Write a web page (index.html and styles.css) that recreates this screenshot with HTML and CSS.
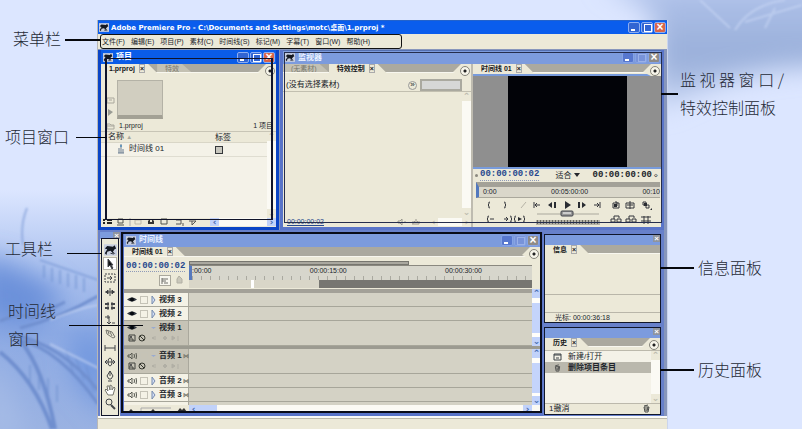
FILE: index.html
```html
<!DOCTYPE html>
<html lang="zh-CN">
<head>
<meta charset="utf-8">
<title>Adobe Premiere Pro</title>
<link rel="stylesheet" href="styles.css">
</head>
<body>
<svg class="scene" viewBox="0 0 802 429" preserveAspectRatio="none" aria-hidden="true">
  <defs>
    <filter id="soft" x="-30%" y="-30%" width="160%" height="160%"><feGaussianBlur stdDeviation="13"/></filter>
    <filter id="fine"><feGaussianBlur stdDeviation="1"/></filter>
    <linearGradient id="sky" x1="0" y1="0" x2="0" y2="1"><stop offset="0" stop-color="#b3c5ec"/><stop offset=".6" stop-color="#98aed9"/><stop offset="1" stop-color="#c6d4f2"/></linearGradient>
    <linearGradient id="ground" x1="0" y1="0" x2="0" y2="1"><stop offset="0" stop-color="#dce6ff"/><stop offset=".3" stop-color="#b0c5f0"/><stop offset=".6" stop-color="#8eabe4"/><stop offset="1" stop-color="#9ab2e2"/></linearGradient>
  </defs>
  <rect width="802" height="429" fill="#dce6ff"/>
  <path d="M600-20H840V66Q760 64 700 90L655 110V15Z" fill="url(#sky)" filter="url(#soft)"/>
  <rect y="190" width="100" height="239" fill="url(#ground)"/>
  <g filter="url(#soft)">
    <path d="M-20 255Q40 270 65 300L30 330L-20 320Z" fill="#6c91da"/>
    <path d="M70 330L110 340V420L75 380Z" fill="#7298df"/>
    <path d="M-10 350L30 440H-20Z" fill="#a5bbe6"/>
  </g>
  <g fill="none" stroke="#708fcf" filter="url(#fine)">
    <path d="M0 321Q22 312 32 318L65 302M20 328Q60 318 98 296M12 334Q62 345 98 390M20 340Q60 350 98 404" stroke-width="3"/>
    <path d="M20 340Q44 370 55 429M0 352Q35 380 52 429" stroke-width="4"/>
    <path d="M27 208Q20 225 23 245M40 260L98 280M44 265V278M52 268V282M60 270V284M68 273V287M76 275V289M84 278V292M30 365V383M39 370V390M48 378V398M57 385V402M66 350L74 375M76 358L84 380M86 366L94 392" stroke-width="2" opacity=".55"/>
  </g>
  <g fill="none" stroke="#cad8f5" stroke-width="2" opacity=".6" filter="url(#fine)"><path d="M735 30Q750 5 785 0M745 22L802 5M700 0L730 28M765 28L775 8M50 320Q80 308 98 305M50 344L98 368"/></g>
</svg>

<svg class="symbols" aria-hidden="true">
  <symbol id="horse" viewBox="0 0 16 14"><rect width="16" height="14" fill="#c9cfdf"/><path d="M1 5L4 2L11 3L13 1L15 5L13 6L11 9L14 12L11 11L8 8L4 9L3 13L1 11L4 6Z" fill="#141820"/><path d="M8 11L12 12" stroke="#141820"/></symbol>
  <symbol id="eye" viewBox="0 0 10 7"><path d="M0 3Q5-1 10 3Q5 7 0 3Z" fill="#343a43"/><circle cx="5" cy="3" r="2" fill="#05090f"/></symbol>
  <symbol id="speaker" viewBox="0 0 10 8"><path d="M1 3H3L5 1V7L3 5H1ZM7 2Q8 4 7 6M9 1Q10 4 9 7" fill="none" stroke="#565850"/></symbol>
  <symbol id="tri" viewBox="0 0 5 8"><path d="M1 0L4 4L1 8Z" fill="#d2def7" stroke="#778bad"/></symbol>
  <symbol id="down" viewBox="0 0 8 5"><path d="M0 1H8L4 4Z" fill="#9aabd0"/></symbol>
  <symbol id="frame" viewBox="0 0 8 8"><path d="M1 1H7V7H1ZM1 5H5V7" fill="none" stroke="#41433e"/><path d="M2 2H4V4H2Z" fill="#555"/></symbol>
  <symbol id="nope" viewBox="0 0 8 8"><circle cx="4" cy="4" r="3" fill="none" stroke="#35372f"/><path d="M2 2L6 6" stroke="#35372f"/></symbol>
  <symbol id="keys" viewBox="0 0 28 8"><path d="M3 2V6M2 3L0 4L2 5M13 2L15 4L13 6L11 4ZM20 2L23 4L20 6ZM26 2V7" fill="#b1afa5" stroke="#b1afa5"/></symbol>
  <symbol id="trash" viewBox="0 0 7 9"><path d="M1 3H6L5 8H2ZM1 2L5 1M3 4V7M5 3L4 7" fill="none" stroke="#494b49"/></symbol>
</svg>

<main class="page">
  <aside class="labels left">
    <p class="l-menu">菜单栏</p><p class="l-project">项目窗口</p><p class="l-tools">工具栏</p><p class="l-time">时间线<br>窗口</p>
  </aside>

  <div class="app">
    <header class="titlebar">
      <svg class="logo"><use href="#horse"/></svg>
      <h1>Adobe Premiere Pro - C:\Documents and Settings\motc\桌面\1.prproj *</h1>
      <span class="winbtns"><button aria-label="最小化" class="min"></button><button aria-label="还原" class="max"></button><button aria-label="关闭" class="close">×</button></span>
    </header>
    <nav class="menubar">
      <div class="menus">
        <button>文件(F)</button><button>编辑(E)</button><button>项目(P)</button><button>素材(C)</button><button>时间线(S)</button><button>标记(M)</button><button>字幕(T)</button><button>窗口(W)</button><button>帮助(H)</button>
        <span class="leader menu-leader"></span>
      </div>
    </nav>

    <div class="workspace">
      <div class="upper">
        <section class="window project">
          <header class="wintitle"><svg class="logo"><use href="#horse"/></svg><h2>项目</h2><span class="winbtns"><button aria-label="最小化" class="min"></button><button aria-label="最大化" class="max"></button><button aria-label="关闭" class="close">×</button></span></header>
          <div class="tabs"><button class="tab on">1.prproj <i>×</i></button><button class="tab">特效</button><button class="more" aria-label="菜单"></button></div>
          <div class="preview">
            <div class="pvbtns"><svg viewBox="0 0 9 7"><path d="M1 1H8V6H1ZM3 3H6" fill="none" stroke="#aaa89d"/></svg><svg viewBox="0 0 9 7"><path d="M2 0L7 3L2 7Z" fill="#999b94"/></svg></div>
            <div class="thumb"></div>
          </div>
          <div class="bin"><svg viewBox="0 0 9 7"><path d="M1 1H4L5 2H8V6H1ZM1 3H8" fill="none" stroke="#aaa89d"/></svg><span>1.prproj</span><span class="count">1 项目</span></div>
          <div class="listwrap">
            <table class="list">
              <thead><tr><th>名称 <small>▲</small></th><th>标签</th></tr></thead>
              <tbody><tr><td><svg viewBox="0 0 8 10"><path d="M4 0V9M2 4V9M6 5V9M1 9H7" stroke="#6b7c91" fill="none"/><circle cx="4" cy="2" r="1" fill="#4f8cba"/></svg>时间线 01</td><td><span class="swatch"></span></td></tr></tbody>
            </table>
            <span class="vscroll pale"><b>⌃</b><b>⌄</b></span>
          </div>
          <div class="binbar">
            <svg viewBox="0 0 100 8"><path d="M2 2H4M6 2H11M2 5H4M6 5H11" stroke="#222" stroke-width="2"/><path d="M17 1H22V5H17ZM16 7H23M60 1H66V6H60Z" fill="#ece9da" stroke="#50524d"/><path d="M29 0V8" stroke="#aaa"/><path d="M34 2H40V6H34Z" fill="none" stroke="#bbb8aa"/><path d="M47 6V3L49 1V4H51V1L53 3V6Z" fill="#333"/><path d="M75 2H80V6H75M82 5V8M88 3H95L91 7V3" fill="none" stroke="#555"/></svg>
            <span class="hscroll"><b>‹</b><b>›</b></span>
          </div>
          <span class="callout c-project"><span class="leader"></span></span>
        </section>

        <section class="window monitor dim">
          <header class="wintitle"><svg class="logo"><use href="#horse"/></svg><h2>监视器</h2><span class="winbtns"><button aria-label="最小化" class="min"></button><button aria-label="最大化" class="max"></button><button aria-label="关闭" class="close">×</button></span></header>
          <div class="panes">
            <div class="effects">
              <div class="tabs"><button class="tab">(无素材)</button><button class="tab on">特效控制 <i>×</i></button><button class="more" aria-label="菜单"></button></div>
              <div class="clip"><span>(没有选择素材)</span><button aria-label="显示时间线">»</button><span class="mini"></span></div>
              <div class="effbody"><span class="vscroll pale"><b>⌃</b><b>⌄</b></span></div>
              <div class="efffoot"><a href="#time">00:00:00:02</a><svg viewBox="0 0 24 8"><path d="M1 3H3L5 1V7L3 5H1ZM7 4H9M15 6H22V3M16 6V3M19 1V5M17 3L19 5L21 3" fill="none" stroke="#9a988e"/></svg><span class="hscroll pale"><b>‹</b><b>›</b></span></div>
            </div>
            <div class="program">
              <div class="tabs"><button class="tab on">时间线 01 <i>×</i></button><button class="more" aria-label="菜单"></button></div>
              <div class="viewer"><div class="screen"></div></div>
              <div class="times"><span class="knob"></span><a href="#time">00:00:00:02</a><select aria-label="缩放"><option>适合</option></select><svg viewBox="0 0 6 4"><path d="M0 0H6L3 4Z" fill="#25272c"/></svg><span class="total">00:00:00:00</span><small>◇</small></div>
              <div class="mruler"><span>0:00</span><span>00:05:00:00</span><span>00:10</span></div>
              <svg class="transport" viewBox="0 0 188 27">
                <g fill="none" stroke="#35373c">
                  <path d="M17 3Q15 3 16 5L15 6L16 7Q15 9 17 9M31 3Q33 3 32 5L33 6L32 7Q33 9 31 9M61 3V9M62 6H67M64 4L62 6L64 8M121 6H126M124 4L126 6L124 8M127 3V9"/>
                  <path d="M16 17Q14 17 15 19L14 20L15 21Q14 23 16 23M17 20H21M31 20H35M33 18L35 20L33 22M37 17Q39 17 38 19L39 20L38 21Q39 23 37 23M43 17Q41 17 42 19L41 20L42 21Q41 23 43 23M50 17Q52 17 51 19L52 20L51 21Q52 23 50 23"/>
                  <path d="M140 4H146V9H140ZM142 3H144V7H142M153 4H161V9H153ZM157 2V10M154 6H160M170 3H173V6H170ZM173 6H176V9H173Z"/>
                  <path d="M138 20H142V23H138ZM144 20H148V23H144ZM141 20V17H146V19M153 20H157V23H153ZM159 20H163V23H159ZM156 20V17H161V19M168 18H178M168 22H178M171 17V25M175 17V25"/>
                </g>
                <g fill="#292c32"><path d="M79 3V9L75 6ZM81 3H83V9H81ZM92 2L98 6L92 10ZM105 3H107V9H105ZM109 3V9L113 6ZM45 18L49 20L45 22ZM141 5H144V8H141ZM171 4H174V7H171ZM179 9V11H177Z"/></g>
                <path d="M48 9L53 3" stroke="#b6b3a6"/>
                <path d="M64 15H126" stroke="#aaa89d"/><rect x="88" y="12" width="12" height="5" rx="1" fill="#999" stroke="#41434a"/><path d="M90 14H98" stroke="#fff"/>
                <rect x="63" y="21" width="64" height="5" fill="#b4b2a8"/><path d="M64 23H126" stroke="#68675e" stroke-width="4" stroke-dasharray="1 2"/>
              </svg>
            </div>
          </div>
          <span class="callout c-monitor"><span class="leader"></span></span>
        </section>
      </div>

      <div class="lower">
        <section class="toolbox" aria-label="工具栏">
          <header><button aria-label="关闭">×</button></header>
          <svg class="brand"><use href="#horse"/></svg>
          <button class="sel" aria-label="选择"><svg viewBox="0 0 12 12"><path d="M4 1V9L6 7L8 11L9 10L7 7H9Z" fill="#101215"/></svg></button>
          <button aria-label="轨道选择"><svg viewBox="0 0 12 12"><path d="M1 2H11V10H1Z" stroke-dasharray="2 1"/><path d="M3 6H8M6 4L8 6L6 8"/></svg></button>
          <button aria-label="波纹编辑"><svg viewBox="0 0 12 12"><path d="M6 2V10M1 6H11" /><path d="M2 6L4 4V8ZM10 6L8 4V8Z" fill="#333"/></svg></button>
          <button aria-label="滚动编辑"><svg viewBox="0 0 12 12"><path d="M4 2V10M8 2V10"/><path d="M1 4H5M7 4H11M1 8H5M7 8H11" stroke-width="2"/></svg></button>
          <button aria-label="速率伸缩"><svg viewBox="0 0 12 12"><path d="M1 3H6M4 1V5M5 3V10M3 8L5 10L7 8M8 9H11"/></svg></button>
          <button aria-label="剃刀"><svg viewBox="0 0 12 12"><path d="M2 2L8 4L11 9L9 10L3 6ZM4 3L5 6M6 4L8 8" stroke="#77776e"/></svg></button>
          <button aria-label="滑动"><svg viewBox="0 0 12 12"><path d="M1 3V9M11 3V9M1 6H11"/></svg></button>
          <button aria-label="滑行"><svg viewBox="0 0 12 12"><path d="M1 6H11M3 4L1 6L3 8M9 4L11 6L9 8"/><ellipse cx="6" cy="6" rx="2" ry="4"/></svg></button>
          <button aria-label="钢笔"><svg viewBox="0 0 12 12"><path d="M6 1L9 6L7 9H5L3 6ZM6 1V6M4 11H8"/></svg></button>
          <button aria-label="手形"><svg viewBox="0 0 12 12"><path d="M4 11L1 6L2 5L4 7L3 2L5 2L6 6L6 1L8 2V6L10 3L11 4L9 11Z" fill="#fff" stroke="#77766d"/></svg></button>
          <button aria-label="缩放"><svg viewBox="0 0 12 12"><circle cx="5" cy="4" r="3"/><path d="M7 7L11 11" stroke-width="2"/></svg></button>
          <span class="callout c-tools"><span class="leader"></span></span>
        </section>

        <section class="window timeline dim">
          <header class="wintitle"><svg class="logo"><use href="#horse"/></svg><h2>时间线</h2><span class="winbtns"><button aria-label="最小化" class="min"></button><button aria-label="最大化" class="max"></button><button aria-label="关闭" class="close">×</button></span></header>
          <div class="tabs"><button class="tab on">时间线 01 <i>×</i></button><button class="more" aria-label="菜单"></button></div>
          <div class="tltop">
            <div class="tlinfo"><a href="#time" id="time">00:00:00:02</a><div><button class="snap" aria-label="吸附"><svg viewBox="0 0 10 8"><path d="M2 1V7M2 2H8M2 4H6M4 6H8" stroke="#6e6f6a" fill="none"/></svg></button><svg class="mark" viewBox="0 0 7 9"><path d="M1 8V4L3 1L6 4V8Z" fill="#c9c7ba" stroke="#b2b0a4"/></svg></div></div>
            <div class="ruler"><div class="zoombar"></div><div class="scale"><span>:00:00</span><span>00:00:15:00</span><span>00:00:30:00</span></div><div class="work"></div></div>
          </div>
          <div class="group">
            <div class="tracks">
              <div class="band"></div>
              <div class="track"><div class="head"><svg><use href="#eye"/></svg><i></i><svg class="t"><use href="#tri"/></svg>视频 3</div></div>
              <div class="track"><div class="head"><svg><use href="#eye"/></svg><i></i><svg class="t"><use href="#tri"/></svg>视频 2</div></div>
              <div class="track open"><div class="head"><svg><use href="#eye"/></svg><i></i><svg class="t"><use href="#down"/></svg>视频 1</div><div class="sub"><svg><use href="#frame"/></svg><svg><use href="#nope"/></svg><svg class="k"><use href="#keys"/></svg></div></div>
            </div>
            <span class="vscroll"><b>⌃</b><b>⌄</b></span>
          </div>
          <div class="group audio">
            <div class="tracks">
              <div class="track open"><div class="head"><svg><use href="#speaker"/></svg><i></i><svg class="t"><use href="#down"/></svg>音频 1<em>⋈</em></div><div class="sub"><svg><use href="#frame"/></svg><svg><use href="#nope"/></svg><svg class="k"><use href="#keys"/></svg></div></div>
              <div class="track"><div class="head"><svg><use href="#speaker"/></svg><i></i><svg class="t"><use href="#tri"/></svg>音频 2<em>⋈</em></div></div>
              <div class="track"><div class="head"><svg><use href="#speaker"/></svg><i></i><svg class="t"><use href="#tri"/></svg>音频 3<em>⋈</em></div></div>
              <div class="track cut"></div>
            </div>
            <span class="vscroll"><b>⌃</b><b>⌄</b></span>
          </div>
          <div class="tlfoot"><svg viewBox="0 0 65 8"><path d="M4 7L7 4L10 7ZM26 7L29 4L32 7ZM53 7L56 3L58 5L60 3L63 7Z" fill="#333"/><path d="M17 6V3H47" fill="none" stroke="#aaa"/></svg><span class="hscroll"><b>‹</b><b>›</b></span></div>
          <span class="callout c-time"><span class="leader"></span></span>
        </section>

        <div class="side">
          <section class="palette info">
            <header><button aria-label="关闭">×</button></header>
            <div class="tabs"><button class="tab on">信息 <i>×</i></button></div>
            <div class="blank"></div><div class="blank two"></div><p>光标: 00:00:36:18</p>
            <span class="leader"></span>
          </section>
          <section class="palette history">
            <header><button aria-label="关闭">×</button></header>
            <div class="tabs"><button class="tab on">历史 <i>×</i></button><button class="more" aria-label="菜单"></button></div>
            <div class="hist">
              <ul><li><svg viewBox="0 0 9 8"><path d="M1 1H8V7H1ZM1 2H8M3 5H6" fill="none" stroke="#3c4247"/></svg>新建/打开</li><li class="cur"><svg viewBox="0 0 7 9"><use href="#trash"/></svg>删除项目条目</li></ul>
              <span class="vscroll pale"><b>⌃</b><b>⌄</b></span>
            </div>
            <footer><span>1撤消</span><svg><use href="#trash"/></svg></footer>
            <span class="leader"></span>
          </section>
        </div>
      </div>
    </div>
    <footer class="status"></footer>
  </div>

  <aside class="labels right">
    <p class="r-monitor">监 视 器 窗 口 /<br>特效控制面板</p><p class="r-info">信息面板</p><p class="r-history">历史面板</p>
  </aside>
</main>
</body>
</html>
```

FILE: styles.css
```css
* { box-sizing: border-box; }
body { margin: 0; background: #dce6ff; color: #20242a; font: 8px/10px "Liberation Sans", "Noto Sans CJK SC", sans-serif; }
h1, h2, p, ul { margin: 0; padding: 0; font: inherit; list-style: none; }
button, select { margin: 0; padding: 0; border: 0; background: none; color: inherit; font: inherit; appearance: none; white-space: nowrap; }
a { color: #27488e; text-decoration: none; }
svg { display: block; flex: none; }
.symbols { position: absolute; width: 0; height: 0; }
.scene { position: absolute; inset: 0; z-index: -1; width: 100%; height: 100%; }
.page { display: grid; grid-template-columns: 97px minmax(0, 1fr) 134px; min-height: 100vh; padding-top: 20px; overflow: hidden; }

/* Annotations */
.labels { font: 300 16px/28px "Noto Sans CJK SC", sans-serif; color: #252a36; white-space: nowrap; }
.left { padding: 4px 0 0 5px; }
.l-menu { padding-left: 8px; }
.l-project { margin-top: 70px; }
.l-tools { margin-top: 84px; }
.l-time { margin-top: 34px; padding-left: 3px; }
.right { padding: 45px 0 0 12px; }
.r-info, .r-history { padding-left: 18px; }
.r-info { margin-top: 132px; }
.r-history { margin-top: 74px; }
.callout { position: absolute; z-index: 3; border: 1px solid #10142a; pointer-events: none; }
.leader { position: absolute; z-index: 4; height: 1px; background: #05070c; }

/* Application frame */
.app { display: flex; flex-direction: column; min-width: 0; border-left: 1px solid #b9b8b5; border-right: 1px solid #cbd5ed; background: #ece9d8; }
.titlebar, .wintitle { display: flex; align-items: center; gap: 3px; color: #fff; }
.titlebar { height: 14px; padding: 0 1px; gap: 2px; background: #0a5ded; border-top: 1px solid #2463cb; }
.titlebar h1 { flex: 1; font: bold 7px/12px "DejaVu Sans", "Noto Sans CJK SC", sans-serif; white-space: nowrap; }
.logo { width: 10px; height: 9px; }
.winbtns { display: flex; gap: 1px; margin-left: auto; }
.winbtns button { width: 12px; height: 11px; border: 1px solid #8caef1; border-radius: 2px; background: #3265d2; color: #fff; font: bold 12px/9px "Liberation Sans", sans-serif; }
.winbtns .close { background: #d96549; }
.winbtns .min::after, .winbtns .max::after { content: ""; display: block; margin: 5px auto 0 2px; width: 4px; height: 2px; background: #fff; }
.winbtns .max::after { margin-top: 1px; width: 6px; height: 6px; border: 1px solid #fff; background: none; }
.menubar { display: flex; height: 15px; padding-left: 2px; }
.menus { position: relative; display: flex; gap: 6px; padding: 0 31px 0 1px; border: 1px solid #111; border-radius: 3px; font-size: 7px; }
.menu-leader { left: -36px; top: 4px; width: 35px; height: 2px; }
.workspace { padding: 1px 3px 0 0; background: #8796bc; }
.upper { display: grid; grid-template: 100% / 181px minmax(0, 1fr); gap: 1px; height: 180px; }
.lower { display: grid; grid-template-columns: 20px minmax(0, 1fr) 120px; gap: 1px; height: 186px; padding: 2px 0 1px 2px; background: #6780ca; }
.status { flex: 1; border-top: 2px solid #fafaf8; box-shadow: inset 0 1px #bcb9a9; background: #ece9d8; }

/* Child windows */
.window { position: relative; display: flex; flex-direction: column; min-width: 0; border: 3px solid #0b45c6; border-top-width: 0; background: #ece9d8; }
.wintitle { flex: none; height: 14px; padding: 0 1px 0 2px; background: #0a5ce8; }
.wintitle h2 { font-weight: bold; }
.dim { border-color: #5974c8; }
.dim .wintitle { background: #7c9bdd; color: #eaf1ff; border-top: 1px solid #536fb1; }
.dim .winbtns button { border-color: #86a3e4; background: #5777ce; }
.dim .winbtns .max { background: #7893d9; }
.dim .winbtns .max::after { border-color: #9ab1e7; }
.dim .winbtns .close { background: #8e8b88; }
.tabs { display: flex; flex: none; height: 9px; background: #aba99f; border-bottom: 1px solid #f8f7ef; }
.tab { padding: 0 12px 0 8px; background: #c4c1b3; color: #77776d; font-size: 7px; line-height: 9px; clip-path: polygon(0 0, calc(100% - 9px) 0, 100% 100%, 0 100%); }
.tab.on { background: #ece9d8; color: #15171a; font-weight: bold; height: 9px; }
.tab i { margin-left: 2px; border: 1px solid #aaa; font-style: normal; line-height: 5px; }
.more { position: relative; width: 18px; height: 12px; margin-left: auto; background: #ece9d8; clip-path: polygon(8px 0, 100% 0, 100% 100%, 8px 100%, 0 8px); }
.more::after { content: ""; position: absolute; right: 1px; top: 2px; width: 8px; height: 8px; border: 1px solid #85847b; border-radius: 50%; background: radial-gradient(#222 0 1px, #f6f4e9 2px); }
.vscroll, .hscroll { display: flex; justify-content: space-between; flex: none; overflow: hidden; background: #fbfaf4; color: #466bb1; }
.vscroll { flex-direction: column; width: 9px; }
.vscroll b, .hscroll b { flex: none; width: 9px; height: 9px; background: #c1d2fa; font: bold 9px/9px "DejaVu Sans", sans-serif; text-align: center; }
.pale b { background: #ece9d8; color: #bdbbae; }
.hscroll { height: 8px; }

/* Project window */
.preview { display: flex; flex: none; gap: 2px; height: 48px; padding: 7px 0 0 5px; }
.pvbtns { display: flex; flex-direction: column; justify-content: flex-end; gap: 5px; width: 9px; padding-bottom: 5px; }
.pvbtns svg { width: 9px; height: 7px; }
.thumb { width: 46px; height: 39px; border: 1px solid #b4b2a6; border-bottom: 4px solid #a3a195; background: #d1cec0; }
.bin { display: flex; flex: none; gap: 4px; align-items: center; height: 10px; padding: 0 3px 0 5px; font-size: 7px; }
.bin svg { width: 9px; height: 7px; }
.count { margin-left: auto; }
.listwrap { display: flex; flex: 1; min-height: 0; border-top: 1px solid #c8c5b6; background: #f4f2e8; }
.list { flex: 1; border-collapse: collapse; table-layout: fixed; align-self: flex-start; }
.list th { height: 10px; padding: 0 0 0 7px; background: #ece9d8; border-bottom: 1px solid #d9d6c7; font-weight: normal; line-height: 9px; text-align: left; }
.list th:first-child { width: 107px; }
.list small { color: #aaa89d; font-size: 6px; }
.list td { height: 14px; padding: 0 0 0 7px; border-bottom: 1px solid #dfddd1; }
.list td:first-child { padding-left: 16px; }
.list td svg { display: inline-block; width: 8px; height: 10px; margin-right: 4px; vertical-align: middle; }
.swatch { display: block; width: 8px; height: 8px; border: 1px solid #34373a; background: #c8c7be; }
.binbar { display: flex; flex: none; justify-content: space-between; height: 9px; }
.binbar svg { width: 100px; height: 8px; }
.binbar .hscroll { width: 66px; }
.c-project { inset: 8px 3px 7px 4px; border-width: 1px 2px; }
.c-project .leader { right: 100%; top: 78px; width: 31px; }

/* Monitor window */
.panes { display: grid; grid-template: 100% / 1fr 1fr; gap: 2px; flex: 1; min-height: 0; background: #bebbb0; }
.effects, .program { display: flex; flex-direction: column; min-width: 0; background: #ece9d8; }
.clip { display: flex; flex: none; align-items: center; height: 19px; padding: 6px 9px 0 3px; border-bottom: 1px solid #c2bfb0; }
.clip button { width: 9px; height: 9px; margin: 0 3px 0 auto; border: 1px solid #999; border-radius: 50%; line-height: 6px; }
.mini { width: 42px; height: 12px; border: 2px solid #aaa99f; background: #d6d7d6; }
.effbody { display: flex; justify-content: flex-end; flex: 1; }
.efffoot { display: flex; align-items: center; height: 10px; padding-left: 4px; }
.efffoot a { font-size: 7px; text-decoration: underline; }
.efffoot svg { width: 24px; height: 8px; margin-left: auto; }
.efffoot .hscroll { width: 42px; margin-left: 8px; }
.viewer { display: flex; flex: none; justify-content: center; height: 95px; margin-top: 1px; border: solid #789bdb; border-width: 2px 0; background: #8f8f8f; }
.screen { width: 119px; background: #020308; }
.times { display: flex; flex: none; align-items: center; gap: 2px; height: 12px; padding: 0 2px; font: bold 9px/11px "Liberation Mono", monospace; }
.times a, .tlinfo a { border-bottom: 1px dotted #8e9ab8; }
.knob { width: 3px; height: 3px; border-radius: 50%; background: #8c8a80; }
.times select { width: 17px; margin-left: 14px; font: 8px/10px "Noto Sans CJK SC", sans-serif; }
.times svg { width: 6px; height: 4px; }
.total { margin-left: auto; }
.times small { width: 5px; font-size: 6px; }
.mruler { display: flex; flex: none; justify-content: space-between; height: 16px; margin: 1px 1px 0 3px; padding-left: 4px; border-top: 5px solid #a3a198; border-left: 3px solid #5278be; border-bottom: 1px solid #aaa89c; background: #dad7ca; font-size: 7px; line-height: 9px; }
.transport { width: 188px; height: 27px; margin-top: 1px; }
.c-monitor { inset: 2px -1px 4px 1px; border-color: #252d4c; }
.c-monitor .leader { left: 100%; top: 40px; width: 17px; height: 2px; }

/* Tools */
.toolbox { position: relative; display: flex; flex-direction: column; align-items: center; gap: 1px; background: #ece9d8; }
.toolbox header, .palette header { display: flex; flex: none; justify-content: flex-end; align-self: stretch; background: #7c9bdd; color: #fff; }
.toolbox header { height: 7px; margin-bottom: 4px; }
.toolbox header button, .palette header button { width: 7px; height: 7px; background: #8f949e; font: bold 8px/6px "Liberation Sans", sans-serif; }
.brand { width: 13px; height: 12px; }
.toolbox > button { width: 14px; height: 13px; }
.toolbox > button svg { width: 12px; height: 12px; margin: auto; fill: none; stroke: #44464a; }
.toolbox > .sel { border: 1px solid #b6b4a8; background: #fff; }
.c-tools { inset: 6px 1px 0 1px; }
.c-tools .leader { right: 100%; top: 14px; width: 35px; }

/* Timeline */
.timeline .tabs { height: 10px; }
.timeline .wintitle { height: 15px; }
.tltop { display: grid; flex: none; grid-template-columns: 65px minmax(0, 1fr); height: 32px; padding-right: 8px; }
.tlinfo { padding: 4px 0 0 2px; font: bold 9px/11px "Liberation Mono", monospace; }
.tlinfo div { display: flex; gap: 5px; justify-content: flex-end; padding: 3px 6px 0 0; }
.snap { width: 12px; height: 11px; border: 1px solid #aaa89c; background: #f8f7ef; }
.snap svg { width: 10px; height: 8px; }
.mark { width: 7px; height: 9px; }
.ruler { display: flex; flex-direction: column; padding-top: 4px; }
.zoombar { width: 64%; height: 4px; border: 1px solid #77766f; background: #aaa89f; }
.scale { display: flex; justify-content: space-between; height: 15px; padding-right: 50px; border-top: 1px solid #8a887f; background: repeating-linear-gradient(90deg, #aaa9a0 0 1px, #d7d6cc 1px 9px) bottom / 100% 4px no-repeat, #d7d6cc; font-size: 7px; line-height: 9px; border-left: 3px solid #5779bd; }
.work { height: 8px; background: linear-gradient(90deg, #d9d6c8 0 18%, #fff 18% 19%, #d9d6c8 19% 38%, #777671 38%); }
.group { display: flex; flex: none; }
.group .vscroll { width: 8px; background: linear-gradient(#fffefa 25%, #c4d4fb 25% 78%, #fffefa 78%); }
.tracks { flex: 1; background: linear-gradient(90deg, #f4f2e6 0 64px, #aaa89d 64px 65px, #d4d2c5 65px); }
.band { height: 4px; background: #a3a198; }
.track { height: 14px; border-bottom: 1px solid #a7a69a; }
.track.open { height: 25px; background: linear-gradient(90deg, #c6c3b6 0 64px, #aaa89d 64px 65px, #d4d2c5 65px); }
.track.cut { height: 3px; border: 0; }
.head { display: flex; align-items: center; gap: 3px; width: 64px; height: 13px; padding-left: 3px; font-weight: bold; white-space: nowrap; }
.head svg { width: 10px; height: 8px; }
.head i { flex: none; width: 8px; height: 8px; border: 1px solid #c5c3b7; }
.head .t { width: 5px; }
.head em { margin-left: -2px; color: #77766d; font-size: 6px; font-style: normal; }
.sub { display: flex; align-items: center; gap: 2px; padding-left: 4px; }
.sub svg { width: 8px; height: 8px; }
.sub .k { width: 28px; margin-left: 4px; }
.audio { border-top: 3px solid #9c9b91; }
.tlfoot { display: flex; flex: 1; overflow: hidden; }
.tlfoot svg { width: 65px; height: 8px; }
.tlfoot .hscroll { flex: 1; padding-right: 8px; background: linear-gradient(90deg, #c1d2fa 0 28px, #fbfaf4 28px); }
.c-time { inset: 0 -2px 0 -3px; border-width: 2px; border-color: #090c18; }
.c-time .leader { right: calc(100% - 20px); top: 91px; width: 74px; }

/* Info and history palettes */
.side { display: grid; grid-template-rows: 89px 88px; gap: 4px; padding: 2px 3px 0 0; }
.palette { position: relative; display: flex; flex-direction: column; min-width: 0; border: 1px solid #10162a; background: #ece9d8; }
.palette header { height: 10px; }
.info .blank { height: 41px; border-bottom: 1px solid #b9b6a9; }
.info .two { height: 18px; }
.info p { padding-left: 10px; font-size: 7px; line-height: 9px; }
.info .leader { left: 100%; top: 32px; width: 34px; height: 2px; }
.hist { display: flex; flex: 1; margin-top: 3px; border: solid #bcb9ac; border-width: 1px 0; background: #f4f2e8; }
.hist ul { flex: 1; }
.hist li { display: flex; align-items: center; gap: 6px; height: 11px; padding-left: 8px; }
.hist li svg { width: 9px; height: 8px; }
.hist .cur { background: #bab8ad; font-weight: bold; }
.palette footer { display: flex; justify-content: space-between; padding: 0 10px 0 4px; height: 10px; }
.palette footer svg { width: 7px; height: 9px; }
.history .leader { left: 100%; top: 41px; width: 34px; height: 2px; }
```
